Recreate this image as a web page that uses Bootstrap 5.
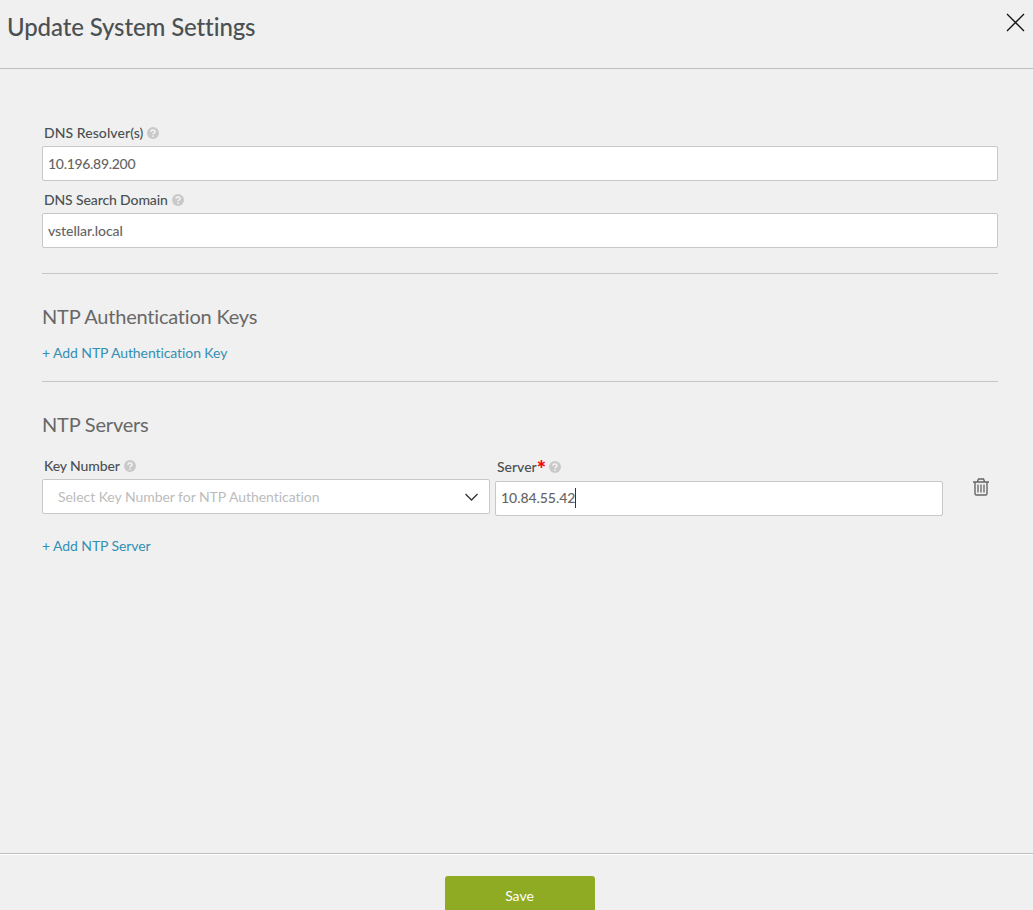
<!DOCTYPE html>
<html lang="en">
<head>
<meta charset="utf-8">
<meta name="viewport" content="width=device-width, initial-scale=1">
<title>Update System Settings</title>
<link rel="stylesheet" href="https://cdn.jsdelivr.net/npm/bootstrap@5.3.0/dist/css/bootstrap.min.css">
<style>
body { background: #f0f0f0; color: #50565a; font-family: Lato, sans-serif; font-size: 14px; line-height: 20px; font-variant-ligatures: none; }
.dialog-head { height: 69px; padding: 12px 8px 0 7px; border-bottom: 1px solid #bdbfbf; }
.dialog-title { font-size: 24px; line-height: 30px; font-weight: 500; color: #4b5153; letter-spacing: -.12px; }
.dialog-main { padding: 54px 35px 0 42px; }
.dialog-foot { height: 57px; border-top: 1px solid #bdbfbf; box-shadow: inset 0 1px #fff; padding: 22px 0 0 6px; }
.field-label { display: flex; align-items: center; height: 20px; margin: 0 0 3px 2px; font-size: 14px; font-weight: 500; color: #4b5153; white-space: nowrap; }
.field-label svg { margin-left: 4px; }
.label-wide { letter-spacing: .07px; }
.label-tight { letter-spacing: -.12px; }
.form-control, .form-select { height: 35px; padding: 7px 5px; border-color: #c8c8c8; border-radius: 2px; font-size: 14px; line-height: 20px; font-weight: 500; color: #656565; letter-spacing: -.05px; }
.value-tight { letter-spacing: -.3px; }
.form-select { background-image: none; color: #bcbcbc; font-weight: 400; padding: 7px 10px 7px 15px; letter-spacing: -.04px; }
.rule-line { border-top: 1px solid #c6c6c6; }
.section-title { font-size: 20px; line-height: 26px; font-weight: 400; color: #686868; margin: 0; letter-spacing: -.2px; }
.add-link { color: #338fb4; text-decoration: none; line-height: 20px; white-space: nowrap; letter-spacing: -.09px; }
.text-caret { width: 1px; height: 20px; background: #333; }
.star { color: #f00; font-size: 22px; line-height: 20px; font-weight: 900; height: 16px; margin-right: -1px; }
.btn-save { width: 150px; height: 40px; padding: 0 0 2px; background: #8faa23; color: #fff; border: 0; border-radius: 3px; font-size: 14px; }
.btn-save:hover { background: #80991e; color: #fff; }
</style>
</head>
<body class="overflow-hidden">
<svg class="d-none">
  <symbol id="help" viewBox="0 0 12 12">
    <circle cx="6" cy="6" r="6" fill="#c9c9c9"/>
    <path d="M4 4.7C4 2.4 8 2.4 8 4.7 8 6 6 6 6 7.3" fill="none" stroke="#f3f3f3" stroke-width="1.5"/>
    <circle cx="6" cy="9.1" r=".9" fill="#f3f3f3"/>
  </symbol>
</svg>
<div class="vh-100 d-flex flex-column">
  <header class="dialog-head d-flex justify-content-between align-items-start flex-shrink-0">
    <h1 class="dialog-title m-0">Update System Settings</h1>
    <button class="btn p-0 border-0 lh-1" aria-label="Close"><svg class="d-block" width="19" height="20" viewBox="0 0 19 20"><path d="M1 2 18 19M18 2 1 19" stroke="#111" stroke-width="1.3" fill="none"/></svg></button>
  </header>
  <main class="dialog-main flex-grow-1">
    <div class="field-label"><span class="label-wide">DNS Resolver(s)</span><svg width="12" height="12"><use href="#help"/></svg></div>
    <div class="form-control"><span class="value-tight">10.196.89.200</span></div>
    <div class="field-label" style="margin-top:9px"><span class="label-tight">DNS Search Domain</span><svg width="12" height="12"><use href="#help"/></svg></div>
    <div class="form-control"><span>vstellar.local</span></div>
    <div class="rule-line" style="margin-top:25px"></div>
    <h2 class="section-title" style="margin-top:29px"><span>NTP Authentication Keys</span></h2>
    <div style="margin-top:14px"><a class="add-link d-block" href="#"><span>+ Add NTP Authentication Key</span></a></div>
    <div class="rule-line" style="margin-top:18px"></div>
    <h2 class="section-title" style="margin-top:29px"><span>NTP Servers</span></h2>
    <div class="d-flex" style="margin-top:19px">
      <div style="width:448px">
        <div class="field-label"><span class="label-tight">Key Number</span><svg width="12" height="12"><use href="#help"/></svg></div>
        <div class="form-select d-flex justify-content-between align-items-center"><span>Select Key Number for NTP Authentication</span><svg width="15" height="10" viewBox="0 0 15 10"><path d="M1.5 2 7.5 8 13.500 2" fill="none" stroke="#333" stroke-width="1.3"/></svg></div>
      </div>
      <div style="width:448px;margin-left:5px;padding-top:1px">
        <div class="field-label mb-1"><span>Server</span><span class="star">*</span><svg width="12" height="12"><use href="#help"/></svg></div>
        <div class="form-control d-flex" style="padding-top:6px"><span>10.84.55.42</span><i class="text-caret"></i></div>
      </div>
      <button class="btn p-0 border-0 align-self-start" style="margin:22px 0 0 30px" aria-label="Delete"><svg class="d-block" width="16" height="18" viewBox="0 0 16 18" fill="none" stroke="#666"><path d="M0 4H16M4.500 3.500 5.500 1H10.500L11.500 3.500M2 4V15.500Q2 17 3.500 17H12.500Q14 17 14 15.500V4" stroke-width="1.4"/><path d="M5 6.500V14.500M8 6.500V14.500M11 6.500V14.500" stroke-width="1.3"/></svg></button>
    </div>
    <div style="margin-top:20px"><a class="add-link d-block" href="#"><span>+ Add NTP Server</span></a></div>
  </main>
  <footer class="dialog-foot d-flex justify-content-center align-items-start flex-shrink-0">
    <button class="btn btn-save">Save</button>
  </footer>
</div>
<script src="https://cdn.jsdelivr.net/npm/bootstrap@5.3.0/dist/js/bootstrap.bundle.min.js"></script>
</body>
</html>
